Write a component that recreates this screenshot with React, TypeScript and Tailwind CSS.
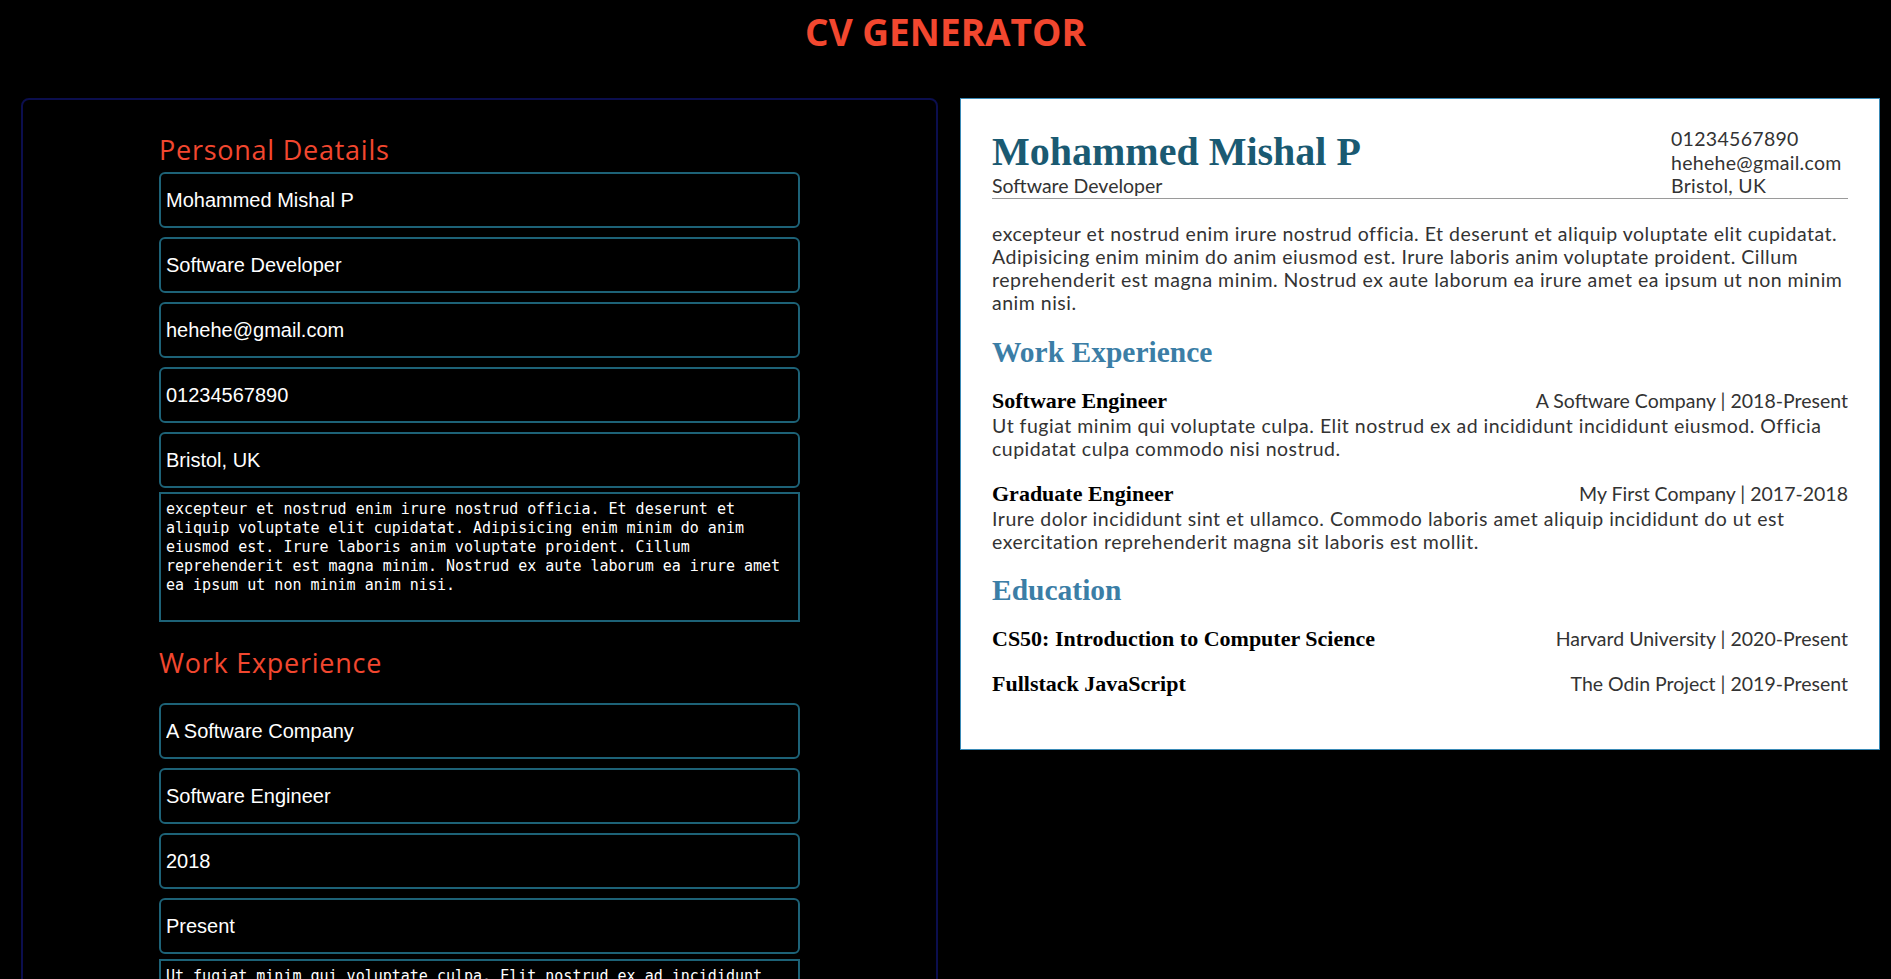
import React from "react";

const personal = [
  "Mohammed Mishal P",
  "Software Developer",
  "hehehe@gmail.com",
  "01234567890",
  "Bristol, UK",
];

const summaryLines = [
  "excepteur et nostrud enim irure nostrud officia. Et deserunt et aliquip voluptate elit cupidatat.",
  "Adipisicing enim minim do anim eiusmod est. Irure laboris anim voluptate proident. Cillum",
  "reprehenderit est magna minim. Nostrud ex aute laborum ea irure amet ea ipsum ut non minim",
  "anim nisi.",
];
const summary = summaryLines.join(" ");

const jobs = [
  {
    company: "A Software Company",
    title: "Software Engineer",
    start: "2018",
    end: "Present",
    desc: "Ut fugiat minim qui voluptate culpa. Elit nostrud ex ad incididunt incididunt eiusmod. Officia cupidatat culpa commodo nisi nostrud.",
  },
  {
    company: "My First Company",
    title: "Graduate Engineer",
    start: "2017",
    end: "2018",
    desc: "Irure dolor incididunt sint et ullamco. Commodo laboris amet aliquip incididunt do ut est exercitation reprehenderit magna sit laboris est mollit.",
  },
];

const schools = [
  { course: "CS50: Introduction to Computer Science", school: "Harvard University", start: "2020", end: "Present" },
  { course: "Fullstack JavaScript", school: "The Odin Project", start: "2019", end: "Present" },
];

const inputCls =
  "block h-[56px] w-full rounded-[6px] border-2 border-[#1d6277] bg-black px-[5px] font-['Liberation_Sans',Arial,sans-serif] text-[20px] text-white outline-none";
const areaCls =
  "block h-[130px] w-full resize-none border-2 border-[#1d6277] bg-black px-[5px] pt-[6px] font-['DejaVu_Sans_Mono',monospace] text-[15px] leading-[19px] text-white outline-none";
const formHeading =
  "font-['Open_Sans',sans-serif] text-[27px] leading-[34px] tracking-[0.75px] text-[#f2472f]";
const serifBold = "font-['Liberation_Serif',serif] font-bold";

function Field({ value }: { value: string }) {
  return <input className={inputCls} defaultValue={value} />;
}

export default function App() {
  return (
    <div className="min-h-screen bg-black pb-10">
      <h1 className="pt-[7px] text-center font-['Open_Sans',sans-serif] text-[37px] font-bold leading-[50px] text-[#f2472f]">
        CV GENERATOR
      </h1>

      <div className="mt-[41px] flex items-start gap-[22px] pl-[21px]">
        {/* Form */}
        <div className="flex w-[917px] justify-center rounded-lg border-2 border-[#0b0e4e] pb-10 pt-[33px]">
          <div className="w-[641px]">
            <h2 className={formHeading}>Personal Deatails</h2>
            <div className="mt-[5px] flex flex-col gap-[9px]">
              {personal.map((v) => (
                <Field key={v} value={v} />
              ))}
            </div>
            <textarea className={`${areaCls} mt-[4px]`} defaultValue={summary} />

            <h2 className={`${formHeading} mt-[24px]`}>Work Experience</h2>
            {jobs.map((j) => (
              <div key={j.company} className="mt-[23px]">
                <div className="flex flex-col gap-[9px]">
                  <Field value={j.company} />
                  <Field value={j.title} />
                  <Field value={j.start} />
                  <Field value={j.end} />
                </div>
                <textarea className={`${areaCls} mt-[5px]`} defaultValue={j.desc} />
              </div>
            ))}

            <h2 className={`${formHeading} mt-[24px]`}>Education</h2>
            {schools.map((s) => (
              <div key={s.course} className="mt-[23px] flex flex-col gap-[9px]">
                <Field value={s.course} />
                <Field value={s.school} />
                <Field value={s.start} />
                <Field value={s.end} />
              </div>
            ))}
          </div>
        </div>

        {/* Preview */}
        <div className="w-[920px] border border-[#3a8ab6] bg-white px-[31px] pb-[52px] pt-[28px] font-['Lato',sans-serif] text-[19.5px] leading-[23px] text-[#333]">
          <div className="flex items-end justify-between border-b border-[#9a9a9a]">
            <div>
              <div className={`${serifBold} text-[40px] leading-[44px] text-[#1a5a72]`}>Mohammed Mishal P</div>
              <div className="leading-[24px]">Software Developer</div>
            </div>
            <div className="w-[177px] whitespace-nowrap leading-[23.7px] tracking-[0.3px]">
              <div>01234567890</div>
              <div>hehehe@gmail.com</div>
              <div>Bristol, UK</div>
            </div>
          </div>

          <p className="mt-[23px] whitespace-nowrap tracking-[0.5px]">
            {summaryLines.map((l, i) => (
              <React.Fragment key={i}>
                {l}
                {i < summaryLines.length - 1 && <br />}
              </React.Fragment>
            ))}
          </p>

          <h3 className={`${serifBold} mt-[22px] text-[29.5px] leading-[33px] text-[#3b7ea6]`}>Work Experience</h3>
          <div className="mt-[19px] flex flex-col gap-[21px]">
            {jobs.map((j) => (
              <div key={j.title}>
                <div className="flex items-baseline justify-between leading-[26px]">
                  <span className={`${serifBold} text-[22px] text-black`}>{j.title}</span>
                  <span>
                    {j.company} | {j.start}-{j.end}
                  </span>
                </div>
                <p className="tracking-[0.5px]">{j.desc}</p>
              </div>
            ))}
          </div>

          <h3 className={`${serifBold} mt-[21px] text-[29.5px] leading-[33px] text-[#3b7ea6]`}>Education</h3>
          <div className="mt-[19px] flex flex-col gap-[19px]">
            {schools.map((s) => (
              <div key={s.course} className="flex items-baseline justify-between leading-[26px]">
                <span className={`${serifBold} text-[22px] text-black`}>{s.course}</span>
                <span>
                  {s.school} | {s.start}-{s.end}
                </span>
              </div>
            ))}
          </div>
        </div>
      </div>
    </div>
  );
}
